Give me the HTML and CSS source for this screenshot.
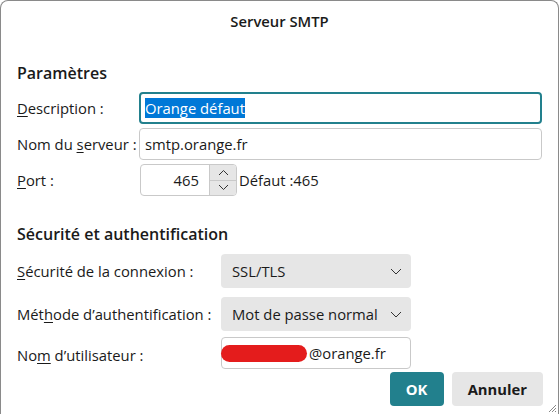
FILE: index.html
```html
<!DOCTYPE html>
<html lang="fr">
<head>
<meta charset="utf-8">
<title>Serveur SMTP</title>
<link rel="stylesheet" href="styles.css">
</head>
<body>
<div class="window">
  <div class="titlebar">Serveur SMTP</div>
  <div class="content">
    <h2 class="section-title first">Paramètres</h2>
    <div class="grid-params">
      <label class="lbl"><span class="ak">D</span>escription :</label>
      <div class="field focused"><span class="sel">Orange défaut</span></div>
      <label class="lbl">Nom du <span class="ak">s</span>erveur :</label>
      <div class="field">smtp.orange.fr</div>
      <label class="lbl"><span class="ak">P</span>ort :</label>
      <div class="port-row">
        <div class="spin">
          <div class="spin-value">465</div>
          <div class="spin-btns">
            <div class="spin-btn"><svg width="11" height="7" viewBox="0 0 11 7"><path d="M1 6 L5.5 1.5 L10 6" fill="none" stroke="#333" stroke-width="1"/></svg></div>
            <div class="spin-btn"><svg width="11" height="7" viewBox="0 0 11 7"><path d="M1 1 L5.5 5.5 L10 1" fill="none" stroke="#333" stroke-width="1"/></svg></div>
          </div>
        </div>
        <span class="default">Défaut :465</span>
      </div>
    </div>
    <h2 class="section-title second">Sécurité et authentification</h2>
    <div class="grid-sec">
      <label class="lbl"><span class="ak">S</span>écurité de la connexion :</label>
      <div class="select"><span>SSL/TLS</span><svg width="12" height="7" viewBox="0 0 12 7"><path d="M1 1 L6 6 L11 1" fill="none" stroke="#333" stroke-width="1"/></svg></div>
      <label class="lbl">Mét<span class="ak">h</span>ode d’authentification :</label>
      <div class="select"><span>Mot de passe normal</span><svg width="12" height="7" viewBox="0 0 12 7"><path d="M1 1 L6 6 L11 1" fill="none" stroke="#333" stroke-width="1"/></svg></div>
      <label class="lbl">No<span class="ak">m</span> d’utilisateur :</label>
      <div class="field user"><span class="redact"></span>@orange.fr</div>
    </div>
    <div class="actions">
      <button class="btn primary">OK</button>
      <button class="btn">Annuler</button>
    </div>
  </div>
  <svg class="grip" width="10" height="10" viewBox="0 0 10 10"><path d="M9 2 L2 9 M9 5 L5 9 M9 8 L8 9" stroke="#888" stroke-width="1"/></svg>
</div>
</body>
</html>
```
FILE: styles.css
```css
html, body {
  margin: 0;
  padding: 0;
  background: #ffffff;
}
body {
  font-family: "Open Sans", "Noto Sans", sans-serif;
  color: #1a1a1a;
  font-size: 14px;
}
.window {
  position: relative;
  box-sizing: border-box;
  width: 559px;
  height: 414px;
  border: 1px solid #8a8a8a;
  border-bottom: none;
  border-radius: 8px 8px 0 0;
  background: #fff;
  overflow: hidden;
}
.titlebar {
  height: 40px;
  display: flex;
  align-items: center;
  justify-content: center;
  font-weight: 600;
  font-size: 14.8px;
  color: #1a1a1a;
}
.content {
  padding: 0 15px 0 16px;
}
.section-title {
  margin: 0;
  font-size: 16px;
  font-weight: 600;
  line-height: 20px;
}
.section-title.first {
  margin-top: 22px;
  margin-bottom: 9px;
}
.section-title.second {
  margin-top: 28px;
  margin-bottom: 10px;
}
.lbl {
  font-size: 14.8px;
  line-height: 20px;
}
.ak {
  text-decoration: underline;
  text-underline-offset: 2px;
}
.grid-params {
  display: grid;
  grid-template-columns: 122px 403px;
  row-gap: 4px;
  align-items: center;
}
.field {
  box-sizing: border-box;
  height: 32px;
  border: 1px solid #c9c9c9;
  border-radius: 4px;
  display: flex;
  align-items: center;
  padding: 0 5px;
  font-size: 14.8px;
  background: #fff;
}
.field.focused {
  border: 2px solid #22808d;
  padding: 0 4px;
}
.sel {
  background: #0078d7;
  color: #fff;
  line-height: 20px;
}
.port-row {
  display: flex;
  align-items: center;
  gap: 2px;
  margin-left: 1px;
}
.spin {
  box-sizing: border-box;
  width: 97px;
  height: 32px;
  border: 1px solid #c9c9c9;
  border-radius: 4px;
  display: flex;
  overflow: hidden;
}
.spin-value {
  flex: 1;
  text-align: right;
  padding-right: 10px;
  line-height: 30px;
  font-size: 14.8px;
}
.spin-btns {
  width: 26px;
  display: flex;
  flex-direction: column;
  border-left: 1px solid #c9c9c9;
}
.spin-btn {
  flex: 1;
  background: #e6e6e6;
  display: flex;
  align-items: center;
  justify-content: center;
}
.spin-btn + .spin-btn {
  border-top: 1px solid #c9c9c9;
}
.default {
  font-size: 14.8px;
}
.grid-sec {
  display: grid;
  grid-template-columns: 204px 190px;
  align-items: center;
  row-gap: 9px;
}
.grid-sec .field {
  margin-top: -3px;
}
.select {
  box-sizing: border-box;
  height: 34px;
  background: #e6e6e6;
  border-radius: 4px;
  display: flex;
  align-items: center;
  justify-content: space-between;
  padding: 0 9px 0 11px;
  font-size: 14.8px;
}
.user {
  padding: 0;
}
.redact {
  display: inline-block;
  width: 86px;
  height: 17px;
  background: #e41c1c;
  border-radius: 9px;
  margin-left: -1px;
  margin-right: 2px;
}
.actions {
  display: flex;
  justify-content: flex-end;
  gap: 8px;
  margin-top: 3px;
}
.btn {
  height: 34px;
  border: none;
  border-radius: 4px;
  background: #e6e6e6;
  font-family: "Open Sans", "Noto Sans", sans-serif;
  font-weight: 700;
  font-size: 14.8px;
  color: #1a1a1a;
  padding: 0 16px;
  min-width: 54px;
}
.btn.primary {
  background: #22808d;
  color: #fff;
  width: 54px;
  padding: 0;
}
.grip {
  position: absolute;
  right: 1px;
  bottom: 1px;
}
```
